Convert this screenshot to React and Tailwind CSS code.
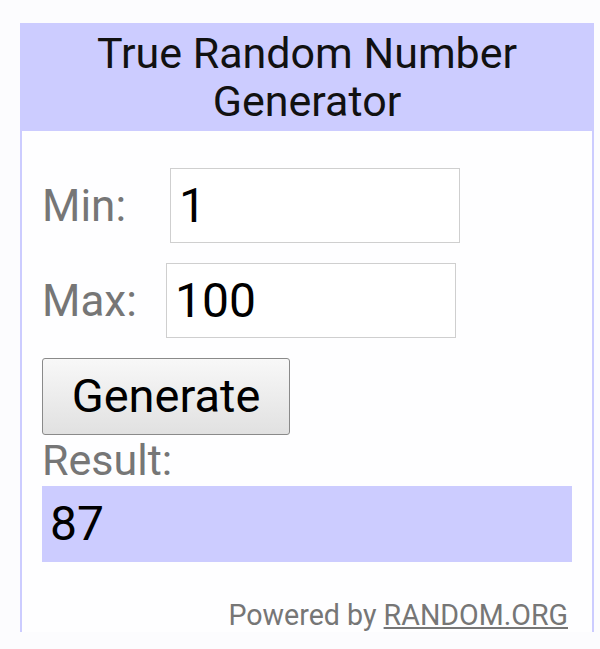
import React, { useState } from "react";

export default function App() {
  const [min, setMin] = useState("1");
  const [max, setMax] = useState("100");
  const [result, setResult] = useState("87");

  const handleGenerate = () => {
    const lo = parseInt(min, 10);
    const hi = parseInt(max, 10);
    if (isNaN(lo) || isNaN(hi) || hi < lo) return;
    setResult(String(lo + Math.floor(Math.random() * (hi - lo + 1))));
  };

  return (
    <div className="min-h-[649px] bg-[#fcfcfe] pt-[23px] pl-[20px] font-['Roboto',sans-serif]">
      <div className="w-[574px] h-[609px] border-x-2 border-[#ccccff] bg-[#fefeff]">
        <div className="-mx-[2px] bg-[#ccccff] py-[6px] text-center text-[43px] leading-[48px] text-[#111]">
          True Random Number
          <br />
          Generator
        </div>
        <div className="px-5">
          <div className="mt-[37px] flex items-center">
            <span className="w-[128px] text-[44px] text-[#767676]">Min:</span>
            <input
              value={min}
              onChange={(e) => setMin(e.target.value)}
              className="w-[290px] h-[75px] border border-[#cfcfcf] bg-white pl-2 text-[48px] text-black outline-none"
            />
          </div>
          <div className="mt-[20px] flex items-center">
            <span className="w-[124px] text-[44px] text-[#767676]">Max:</span>
            <input
              value={max}
              onChange={(e) => setMax(e.target.value)}
              className="w-[290px] h-[75px] border border-[#cfcfcf] bg-white pl-2 text-[48px] text-black outline-none"
            />
          </div>
          <button
            onClick={handleGenerate}
            className="mt-[20px] w-[248px] h-[77px] rounded-[3px] border border-[#8a8a8a] bg-gradient-to-b from-[#f8f8f8] to-[#e1e1e1] text-[47px] text-black"
          >
            Generate
          </button>
          <div className="text-[43px] leading-[51px] text-[#767676]">Result:</div>
          <div className="h-[76px] flex items-center bg-[#ccccff] pl-2 text-[48px] text-black">
            {result}
          </div>
          <div className="mt-[37px] pr-1 text-right text-[28.6px] leading-[32px] text-[#767676]">
            Powered by{" "}
            <a href="#" className="underline text-[#767676]">
              RANDOM.ORG
            </a>
          </div>
        </div>
      </div>
    </div>
  );
}
